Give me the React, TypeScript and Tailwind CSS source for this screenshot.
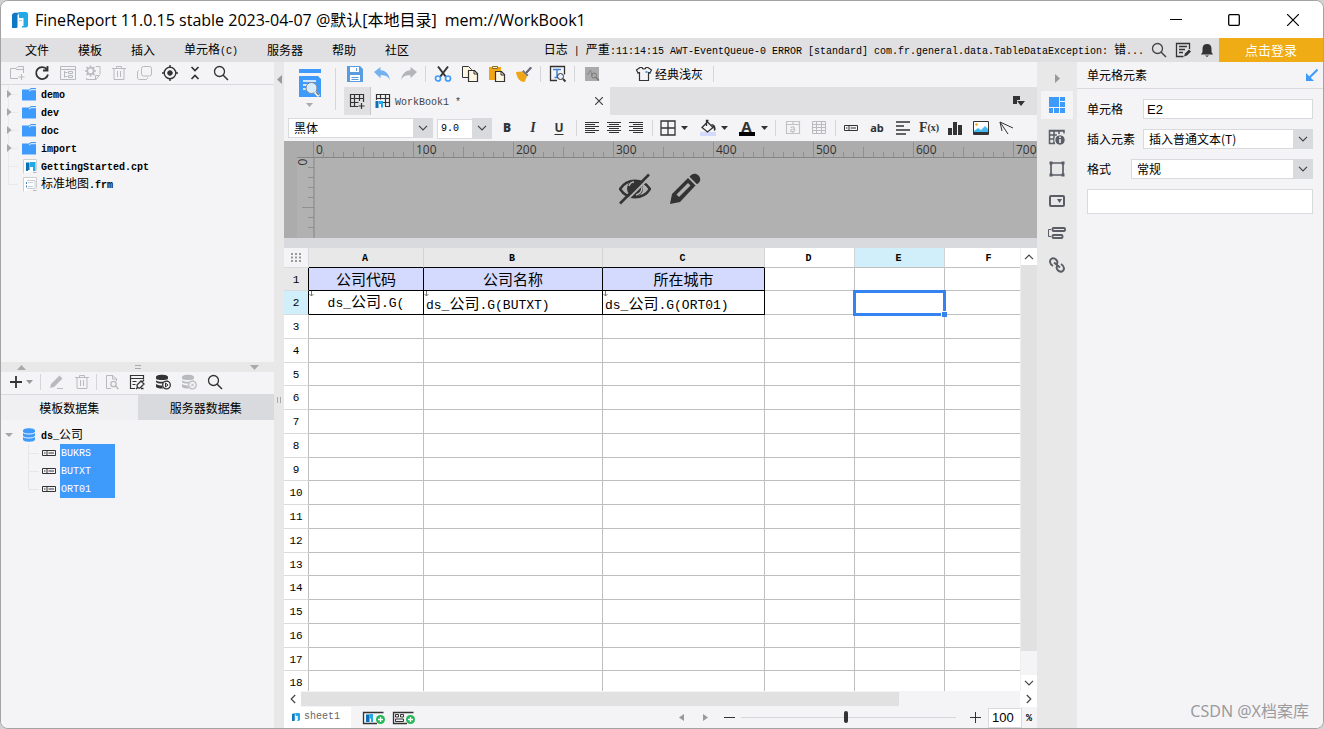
import { Fragment, type ReactNode } from 'react';

type IconProps = {
  children: ReactNode;
  className?: string;
};

/** 18px line icon, drawn on an 18 unit grid */
function Icon({ children, className = 'text-[#333]' }: IconProps) {
  return (
    <svg
      className={`h-[18px] w-[18px] shrink-0 ${className}`}
      viewBox="0 0 18 18"
      fill="none"
      stroke="currentColor"
      strokeWidth={1}
      aria-hidden="true"
    >
      {children}
    </svg>
  );
}

function ToolButton({ label, className = 'w-[27px]', children }: { label: string; className?: string; children: ReactNode }) {
  return (
    <button type="button" aria-label={label} className={`flex shrink-0 items-center justify-center ${className}`}>
      {children}
    </button>
  );
}

function Separator({ className = 'h-4 mx-[3px]' }: { className?: string }) {
  return <span className={`w-px shrink-0 bg-[#d5d6d9] ${className}`} />;
}

function Caret({ className = 'text-[#333]' }: { className?: string }) {
  return (
    <svg className={`h-1 w-[7px] shrink-0 ${className}`} viewBox="0 0 7 4" fill="currentColor" aria-hidden="true">
      <path d="M0 0h7L3.5 4z" />
    </svg>
  );
}

function Chevron({ className = '' }: { className?: string }) {
  return (
    <svg className={`h-[6px] w-[10px] ${className}`} viewBox="0 0 10 6" fill="none" stroke="#444" strokeWidth={1.2} aria-hidden="true">
      <path d="M1 .8l4 4 4-4" />
    </svg>
  );
}

/** Fixed width latin text set beside 12px Chinese text */
function Mono({ children }: { children: ReactNode }) {
  return <span className="font-['Liberation_Mono',monospace] text-[10px]">{children}</span>;
}

/* ---------- logo and file icons ---------- */

function Logo({ className = 'h-4 w-4' }: { className?: string }) {
  return (
    <svg className={`shrink-0 ${className}`} viewBox="0 0 16 16" aria-hidden="true">
      <path d="M0 2.500L2 .8h4.500v13.700L4.500 16H0z" fill="#0d78c4" />
      <path d="M6.500 0h8L16 1.500v12.500L14.500 15.500H10V8.500H6.500z" fill="#22a9e8" />
      <path d="M5.500 2.500h1.500v3.500h4.500v8H10V8H7v7.500H5.500z" fill="#fff" />
    </svg>
  );
}

function Folder() {
  return (
    <svg className="h-[13px] w-[14px]" viewBox="0 0 14 13" aria-hidden="true">
      <path d="M0 1.500h7L9 0h5v12.500H0z" fill="#3f9bfb" />
      <path d="M7 3.200L9 1.700h5" stroke="#f4f4f7" fill="none" />
    </svg>
  );
}

function CptFile() {
  return (
    <svg className="h-[15px] w-[14px]" viewBox="0 0 14 15" aria-hidden="true">
      <path d="M.5 14.500V.5h13v11" fill="#fff" stroke="#cfcfcf" />
      <path d="M3 3.500h3.500v7.500H5v1H3z" fill="#0d6fb8" />
      <path d="M7 3h5.500v9H10V8H7z" fill="#22a9e8" />
      <path d="M10 13.500h3.500" stroke="#bbb" />
    </svg>
  );
}

function FrmFile() {
  return (
    <svg className="h-[15px] w-[14px]" viewBox="0 0 14 15" fill="none" aria-hidden="true">
      <path d="M.5 14.500V.5h13v11" fill="#fff" stroke="#cfcfcf" />
      <path d="M4 3.500h8v8H4M5 5.500h5M5 9.500h5" stroke="#c8cdd3" />
      <path d="M3.500 5v2M3.500 8.500v2" stroke="#3f83c5" />
      <path d="M10 13.500h3.500" stroke="#bbb" />
    </svg>
  );
}

function FieldIcon() {
  return (
    <svg className="h-[6px] w-[14px] shrink-0" viewBox="0 0 14 6" fill="none" stroke="#333" aria-hidden="true">
      <path d="M.5.5h13v5H.5zM5 .5v5M2 3h1.500M6.500 3H12" />
    </svg>
  );
}

function SearchIcon({ className }: { className?: string }) {
  return (
    <Icon className={className}>
      <circle cx="7.500" cy="7.500" r="5" strokeWidth={1.3} />
      <path d="M11 11l5 5" strokeWidth={1.5} />
    </Icon>
  );
}

function Trash() {
  return (
    <Icon className="text-[#b9babd]">
      <path d="M2 4.500h14M6.500 4V2.500h5V4M4 4.500v11h10v-11M7.500 7v6M10.500 7v6" />
    </Icon>
  );
}

function Database({ className = 'text-[#333]', mark }: { className?: string; mark: string }) {
  return (
    <Icon className={className}>
      <path d="M2 4c0-3 12-3 12 0v1.500c0 2-12 2-12 0zM2 7.500c2 1.700 9 1.700 12 0V9c-1 2-11 2-12 0zM2 11c2 1.500 4 1.500 6 1.500l1 3c-4 0-7-.5-7-2z" fill="currentColor" stroke="none" />
      <circle cx="12.500" cy="12" r="3.800" fill="#f4f4f7" strokeWidth={1.300} />
      <path d={mark} />
    </Icon>
  );
}

/* ---------- window chrome ---------- */

const menus = ['文件', '模板', '插入', '单元格', '服务器', '帮助', '社区'];

function TitleBar() {
  return (
    <header className="flex h-[37px] shrink-0 items-center bg-white pl-[11px]">
      <Logo />
      <h1 className="ml-[7px] whitespace-pre font-['Open_Sans','Noto_Sans_CJK_SC',sans-serif] text-[16px] leading-5">
        FineReport 11.0.15 stable 2023-04-07 @默认[本地目录]
      </h1>
      <span className="ml-2 font-['Open_Sans',sans-serif] text-[16px] leading-5">mem://WorkBook1</span>
      <div className="ml-auto flex h-full">
        <ToolButton label="最小化" className="w-[58px]">
          <svg className="h-3 w-3" viewBox="0 0 12 12" stroke="#000"><path d="M0 5.500h12" /></svg>
        </ToolButton>
        <ToolButton label="最大化" className="w-[58px]">
          <svg className="h-3 w-3" viewBox="0 0 12 12" fill="none" stroke="#000" strokeWidth={1.300}><rect x=".7" y=".7" width="10.600" height="10.600" rx="1" /></svg>
        </ToolButton>
        <ToolButton label="关闭" className="w-[60px]">
          <svg className="h-3 w-3" viewBox="0 0 12 12" stroke="#000" strokeWidth={1.200}><path d="M0 0l12 12M12 0L0 12" /></svg>
        </ToolButton>
      </div>
    </header>
  );
}

function MenuBar() {
  return (
    <div className="flex h-6 shrink-0 items-center bg-[#e0e0e2] pl-6">
      <nav className="flex shrink-0 gap-[29px]">
        {menus.map((menu) => (
          <button type="button" key={menu} className="whitespace-nowrap">
            {menu}
            {menu === '单元格' && <Mono>(C)</Mono>}
          </button>
        ))}
      </nav>
      <p className="ml-auto truncate">
        日志<Mono> | </Mono>严重<Mono>:11:14:15 AWT-EventQueue-0 ERROR [standard] com.fr.general.data.TableDataException: </Mono>错<Mono>...</Mono>
      </p>
      <div className="ml-[3px] flex shrink-0 items-center">
        <ToolButton label="搜索" className="w-6"><SearchIcon className="text-[#444]" /></ToolButton>
        <ToolButton label="反馈" className="w-6">
          <Icon>
            <path d="M15.500 8V2.500h-13v13h7M5 5.500h8M5 8.500h6M5 11.500h4" strokeWidth={1.300} />
            <path d="M10 15.500l1-3 4-4 2 2-4 4z" fill="currentColor" stroke="none" />
          </Icon>
        </ToolButton>
        <ToolButton label="通知" className="w-6">
          <Icon>
            <path d="M9 3c3 0 4.500 2 4.500 4.500V11l1.500 2.500H3L4.500 11V7.500C4.500 5 6 3 9 3zM7 14.500h4L9 16z" fill="currentColor" stroke="none" />
          </Icon>
        </ToolButton>
      </div>
      <button type="button" className="h-full w-[104px] shrink-0 bg-[#f0ac14] text-[13px] text-white">点击登录</button>
    </div>
  );
}

/* ---------- left side ---------- */

const folders = ['demo', 'dev', 'doc', 'import'];
const fields = ['BUKRS', 'BUTXT', 'ORT01'];

function TreeBranch({ arrow, last = false }: { arrow?: boolean; last?: boolean }) {
  return (
    <svg className="h-[18px] w-[21px] shrink-0" viewBox="0 0 21 18" aria-hidden="true">
      <path d={last ? 'M7.500 0v9.500H17' : 'M7.500 0v18M7.500 9.500H17'} fill="none" stroke="#e9e9ec" />
      {arrow && <path d="M6 5l4.500 4L6 13z" fill="#a6a6a8" />}
    </svg>
  );
}

function FileTree() {
  return (
    <section className="flex min-h-0 flex-[277] flex-col">
      <ul>
        {folders.map((name) => (
          <li key={name} className="flex h-[18px] items-center">
            <TreeBranch arrow />
            <Folder />
            <span className="ml-[5px] font-bold"><Mono>{name}</Mono></span>
          </li>
        ))}
        <li className="flex h-[18px] items-center">
          <TreeBranch />
          <span className="ml-px"><CptFile /></span>
          <span className="ml-1 font-bold"><Mono>GettingStarted.cpt</Mono></span>
        </li>
        <li className="flex h-[18px] items-center">
          <TreeBranch last />
          <span className="ml-px"><FrmFile /></span>
          <span className="ml-1">标准地图<b><Mono>.frm</Mono></b></span>
        </li>
      </ul>
    </section>
  );
}

function FileTools() {
  return (
    <div className="flex h-[23px] shrink-0 items-center border-b border-[#d9dadd] pb-px pl-[3px] text-[#b9babd]">
      <div className="flex w-[229px] justify-between">
        <ToolButton label="新建文件夹" className="w-[25px]">
          <Icon className="text-[#b9babd]"><path d="M10 14.500H2.500v-10H8l2-2h5.500V9M8 5.500h7.500M13.500 10v6M10.500 13h6" /></Icon>
        </ToolButton>
        <ToolButton label="刷新" className="w-[25px]">
          <Icon><path d="M14 5.500a6 6 0 1 0 1 5M14.500 2v4.500H10" strokeWidth={1.800} /></Icon>
        </ToolButton>
        <ToolButton label="显示位置" className="w-[25px]">
          <Icon className="text-[#b9babd]"><path d="M1.500 2.500h15v13h-15zM1.500 5.500h15M5.500 7v6.500M5.500 8.500h3M5.500 12.500h3M9.500 7.500h4v2h-4zM9.500 11.500h4v2h-4z" /></Icon>
        </ToolButton>
        <ToolButton label="设置" className="w-[25px]">
          <Icon className="text-[#b9babd]">
            <circle cx="6.500" cy="7" r="3.200" strokeWidth={1.600} />
            <path d="M6.500 1.500v2M6.500 10.500v2M1 7h2M10 7h2M2.500 3l1.500 1.500M9 9.500l1.500 1.500M10.500 3L9 4.500M4 9.500L2.500 11" strokeWidth={1.600} />
            <path d="M12 2.500h4v8M2.500 14v1.500h10M15.500 11.500l-4 4v-4z" />
          </Icon>
        </ToolButton>
        <ToolButton label="删除" className="w-[25px]"><Trash /></ToolButton>
        <ToolButton label="复制" className="w-[25px]">
          <Icon className="text-[#b9babd]"><rect x="6.500" y="2.500" width="10" height="9.500" rx="2" /><path d="M4 6.500C2.500 6.500 2.500 8 2.500 8v6s0 1.500 2 1.500H11s1.500 0 1.500-2" /></Icon>
        </ToolButton>
        <ToolButton label="定位" className="w-[25px]">
          <Icon><circle cx="9" cy="9" r="5.800" strokeWidth={1.400} /><circle cx="9" cy="9" r="2.300" fill="currentColor" /><path d="M9 1v3M9 14v3M1 9h3M14 9h3" strokeWidth={1.400} /></Icon>
        </ToolButton>
        <ToolButton label="收起" className="w-[25px]">
          <Icon><path d="M5.500 3L9 6.500 12.500 3M5.500 15L9 11.500l3.500 3.500" strokeWidth={1.700} /></Icon>
        </ToolButton>
        <ToolButton label="搜索" className="w-[25px]"><SearchIcon /></ToolButton>
      </div>
    </div>
  );
}

function DataSetTools() {
  return (
    <div className="flex h-[23px] shrink-0 items-center border-b border-[#d9dadd] pb-[2px] pl-[5px]">
      <ToolButton label="新增数据集" className="w-[27px] gap-px">
        <Icon><path d="M9 3v12M3 9h12" strokeWidth={1.800} /></Icon>
        <Caret className="text-[#999]" />
      </ToolButton>
      <Separator className="ml-[7px] mr-[3px] h-4" />
      <ToolButton label="编辑" className="w-[25px]">
        <Icon className="text-[#b9babd]"><path d="M2 15l1-4 8.500-8.500 3 3L6 14zM9 15h6v1H9z" fill="currentColor" stroke="none" /></Icon>
      </ToolButton>
      <ToolButton label="删除" className="w-[25px]"><Trash /></ToolButton>
      <Separator className="mx-[2px] h-4" />
      <ToolButton label="预览" className="w-[25px]">
        <Icon className="text-[#b9babd]"><path d="M8 15.500H3.500v-13H10l3.500 3.500v2M9.500 2.500V6h4" /><circle cx="10.500" cy="11" r="2.700" strokeWidth={1.300} /><path d="M12.500 13l3 3" strokeWidth={1.500} /></Icon>
      </ToolButton>
      <ToolButton label="连接管理" className="w-[26px]">
        <Icon><path d="M7 15.500H2.500v-13h13v4M2.500 5.500h13M4.500 8.500h4M4.500 11.500h3" strokeWidth={1.200} /><path d="M9 12l4-4 3 3-4 4c-2 .5-3-1-3-3zM14 9l2-2M8 16l2-2M15.500 15.500H13" strokeWidth={1.300} /></Icon>
      </ToolButton>
      <ToolButton label="启用存储过程" className="w-[26px]"><Database mark="M11.500 10v4l2.500-2z" /></ToolButton>
      <ToolButton label="移除存储过程" className="w-[26px]"><Database className="text-[#b9babd]" mark="M11 10.500l3 3M14 10.500l-3 3" /></ToolButton>
      <ToolButton label="搜索" className="w-[25px]"><SearchIcon /></ToolButton>
    </div>
  );
}

function LeftPanel() {
  return (
    <aside className="flex w-[273px] shrink-0 flex-col bg-[#f4f4f7]">
      <FileTools />
      <FileTree />
      <div className="flex h-[10px] shrink-0 items-center justify-between bg-[#e8e8e8] pl-4 pr-[15px]">
        <svg className="h-[5px] w-[9px]" viewBox="0 0 9 5" fill="#a9a9a9"><path d="M0 5h9L4.500 0z" /></svg>
        <svg className="h-1 w-[6px]" viewBox="0 0 6 4" stroke="#aaa"><path d="M0 .5h6M0 3.500h6" /></svg>
        <svg className="h-[5px] w-[9px]" viewBox="0 0 9 5" fill="#a9a9a9"><path d="M0 0h9L4.500 5z" /></svg>
      </div>
      <section className="flex min-h-0 flex-[356] flex-col">
        <DataSetTools />
        <div className="grid h-[25px] shrink-0 grid-cols-2" role="tablist">
          <button type="button" role="tab" aria-selected="true" className="bg-[#f0f0f3]">模板数据集</button>
          <button type="button" role="tab" aria-selected="false" className="bg-[#d9dadd]">服务器数据集</button>
        </div>
        <div className="pt-[6px]">
          <div className="flex h-[18px] items-center">
            <svg className="h-[18px] w-[22px]" viewBox="0 0 22 18" aria-hidden="true"><path d="M4 7h8l-4 4z" fill="#a6a6a8" /></svg>
            <svg className="h-[14px] w-3" viewBox="0 0 12 14" aria-hidden="true">
              <path d="M0 2.500C0-.5 12-.5 12 2.500v9c0 3-12 3-12 0z" fill="#3f9bfb" />
              <path d="M0 4.500c2 2 10 2 12 0M0 8.500c2 2 10 2 12 0" stroke="#f4f4f7" fill="none" />
            </svg>
            <span className="ml-[6px]"><b><Mono>ds_</Mono></b>公司</span>
          </div>
          <ul>
            {fields.map((field, i) => (
              <li key={field} className="flex h-[18px] items-center pl-[21px]">
                <svg className="h-[18px] w-5 shrink-0" viewBox="0 0 20 18" fill="none" stroke="#e6e6e9" aria-hidden="true">
                  <path d={i === fields.length - 1 ? 'M6.500 0v9.500H17' : 'M6.500 0v18M6.500 9.500H17'} />
                </svg>
                <FieldIcon />
                <span className="ml-1 flex h-full w-[55px] items-center bg-[#3f9bfb] pl-px pt-[2px] text-white"><Mono>{field}</Mono></span>
              </li>
            ))}
          </ul>
        </div>
      </section>
    </aside>
  );
}

function Splitter() {
  return (
    <div className="flex w-[10px] shrink-0 flex-col items-center bg-[#e8e8e8] pt-[13px]">
      <svg className="h-[9px] w-[5px]" viewBox="0 0 5 9" fill="#999"><path d="M5 0v9L0 4.500z" /></svg>
      <svg className="mb-auto mt-[313px] h-[6px] w-1" viewBox="0 0 4 6" stroke="#aaa"><path d="M.5 0v6M3.500 0v6" /></svg>
    </div>
  );
}

/* ---------- editor ---------- */

function MainTools() {
  return (
    <div className="-ml-[3px] flex h-[25px] shrink-0 items-center pb-px">
      <ToolButton label="保存">
        <Icon><path d="M1 1h13l3 3v13H1z" fill="#5b9bdf" stroke="none" /><path d="M4 2h9v5H4zM4 10h10v6H4z" fill="#fff" stroke="none" /><path d="M10.500 3v3M5.500 12.500h7M5.500 14.500h7" stroke="#5b9bdf" /></Icon>
      </ToolButton>
      <ToolButton label="撤销">
        <Icon><path d="M1 7l6.500-5v3.200C13 5.500 16 9 17 15c-2-4-5-5-9.500-4.800v3z" fill="#74b1f0" stroke="none" /></Icon>
      </ToolButton>
      <ToolButton label="重做">
        <Icon><path d="M17 7l-6.500-5v3.200C5 5.500 2 9 1 15c2-4 5-5 9.500-4.800v3z" fill="#b4b5b8" stroke="none" /></Icon>
      </ToolButton>
      <Separator />
      <ToolButton label="剪切">
        <Icon><path d="M4 1.500l8 10.500M14 1.500L6 12" strokeWidth={2} /><circle cx="4" cy="13.500" r="2.500" stroke="#3f9bfb" strokeWidth={1.700} /><circle cx="14" cy="13.500" r="2.500" stroke="#3f9bfb" strokeWidth={1.700} /></Icon>
      </ToolButton>
      <ToolButton label="复制">
        <Icon><path d="M1.500 1.500h6l3 3v8h-9z" fill="#fdf6e3" /><path d="M7.500 5.500h6l3 3v8h-9z" fill="#fdf6e3" strokeWidth={1.200} /><path d="M13 5.500V9h3.500" /></Icon>
      </ToolButton>
      <ToolButton label="粘贴">
        <Icon><path d="M1 2h12v13H1z" fill="#f0a514" stroke="none" /><path d="M4.500 1.500h5v2h-5z" fill="#fdf6e3" stroke="#8d6a1c" /><path d="M7.500 6.500h6l3 3v7h-9z" fill="#fdf6e3" strokeWidth={1.200} /><path d="M13 6.500V10h3.500" /></Icon>
      </ToolButton>
      <ToolButton label="格式刷">
        <Icon><path d="M11 7l4.500-5 1 1L12 8z" fill="#667" stroke="#667" /><path d="M8.500 5l5 5-1.500 1.500-5-5z" fill="#777" stroke="none" /><path d="M1 7l6-.5 5 5-2.500 5.500c-4 0-7.500-3-8.500-10z" fill="#f0a514" stroke="none" /></Icon>
      </ToolButton>
      <Separator />
      <ToolButton label="模板查找">
        <Icon><path d="M8 15.500H1.500v-14h14v8" strokeWidth={1.300} /><path d="M4 4.500h8M8 4.500v8M5.500 12.500h4" stroke="#3f83d5" strokeWidth={1.500} /><circle cx="11.500" cy="11.500" r="3" fill="#e6f0fb" /><path d="M14 14l2.500 2.500" strokeWidth={1.800} /></Icon>
      </ToolButton>
      <Separator />
      <ToolButton label="模板检测">
        <Icon><path d="M2 2h14v14H2z" fill="#aaa" stroke="none" /><path d="M3.500 9h2l2-4 2 6" stroke="#888" /><circle cx="11" cy="10.500" r="2.500" stroke="#777" /><path d="M13 12.500l3 3" stroke="#777" strokeWidth={1.500} /></Icon>
      </ToolButton>
      <button type="button" className="ml-[30px] flex items-center">
        <Icon><path d="M5 2.500L1.500 5l1.500 3 1.500-.5v8h9v-8l1.500.5 1.500-3L13 2.500h-2c-.5 2-3.500 2-4 0z" strokeWidth={1.200} /><path d="M10.500 7h2" stroke="#3f9bfb" strokeWidth={2} /></Icon>
        <span className="ml-[2px]">经典浅灰</span>
      </button>
      <Separator className="ml-[10px] h-4" />
    </div>
  );
}

function TabStrip() {
  return (
    <div className="flex h-7 shrink-0 items-stretch bg-[#e0e0e2]">
      <ToolButton label="新建模板" className="w-[27px] border-r border-[#c9c9cc]">
        <Icon><path d="M10 14.500H2.500v-12h13V10M2.500 6.500h13M2.500 10.500h8M6.500 2.500v12M11.500 2.500V9M13.500 11v6M10.500 14h6" strokeWidth={1.200} /></Icon>
      </ToolButton>
      <div className="flex w-[239px] items-center bg-[#f4f4f7] pl-[3px] pr-[6px]">
        <Icon><path d="M2.500 8V2.500h13v12H11M2.500 6.500h13M9 10.500h6M6.500 2.500v5M11.500 2.500v12" strokeWidth={1.200} /><path d="M1.500 9h3v7h-3z" fill="#0d6fb8" stroke="none" /><path d="M5 9h4v6.500H7V12H5z" fill="#22a9e8" stroke="none" /></Icon>
        <span className="ml-[3px] text-[#444]"><Mono>WorkBook1 *</Mono></span>
        <ToolButton label="关闭标签" className="ml-auto w-[10px]">
          <svg className="h-2 w-2" viewBox="0 0 8 8" stroke="#444" strokeWidth={1.200}><path d="M0 0l8 8M8 0L0 8" /></svg>
        </ToolButton>
      </div>
      <ToolButton label="模板列表" className="ml-auto mr-2 w-5">
        <svg className="h-[10px] w-3" viewBox="0 0 12 10" fill="#333"><path d="M0 0h7v4H4v4H0zM4 5h8l-4 5z" /></svg>
      </ToolButton>
    </div>
  );
}

type SelectProps = {
  id: string;
  label: string;
  value: string;
  text?: string;
  className?: string;
};

function Select({ id, label, value, text = 'pl-[5px]', className = '' }: SelectProps) {
  return (
    <div className={`relative h-5 ${className}`}>
      <select id={id} aria-label={label} className={`h-full w-full appearance-none border border-[#d9dadd] bg-white ${text}`}>
        <option>{value}</option>
      </select>
      <span className="pointer-events-none absolute inset-y-0 right-0 flex w-5 items-center justify-center bg-[#d9dadd]">
        <Chevron />
      </span>
    </div>
  );
}

function AlignIcon({ short }: { short: string }) {
  return (
    <Icon>
      <path d="M2 3.500h14M2 7.500h14M2 11.500h14" />
      <path d={short} />
    </Icon>
  );
}

function FormatBar() {
  return (
    <div className="flex h-[26px] shrink-0 items-center overflow-hidden pl-1">
      <Select id="font" label="字体" value="黑体" className="w-[145px]" />
      <Select id="size" label="字号" value="9.0" className="ml-1 w-[55px]" text="pl-[3px] font-['Liberation_Mono',monospace] text-[10px]" />
      <ToolButton label="加粗" className="ml-[2px] w-[26px] font-['Noto_Sans',sans-serif] text-[12px] font-black text-[#333]">B</ToolButton>
      <ToolButton label="倾斜" className="w-[26px] font-['Liberation_Serif',serif] text-[14px] font-bold italic text-[#333]">I</ToolButton>
      <ToolButton label="下划线" className="w-[26px] font-['Noto_Sans',sans-serif] text-[12px] font-bold text-[#333] underline underline-offset-2">U</ToolButton>
      <Separator className="mx-1 h-4" />
      <ToolButton label="左对齐" className="w-[22px]"><AlignIcon short="M2 5.500h10M2 9.500h10M2 13.500h10" /></ToolButton>
      <ToolButton label="居中" className="w-[22px]"><AlignIcon short="M4 5.500h10M4 9.500h10M4 13.500h10" /></ToolButton>
      <ToolButton label="右对齐" className="w-[22px]"><AlignIcon short="M6 5.500h10M6 9.500h10M6 13.500h10" /></ToolButton>
      <Separator className="ml-[5px] mr-[2px] h-4" />
      <ToolButton label="边框" className="w-9 gap-1">
        <Icon><path d="M2 2h14v14H2zM9 2v14M2 9h14" strokeWidth={1.300} /></Icon>
        <Caret />
      </ToolButton>
      <ToolButton label="填充颜色" className="ml-1 w-9 gap-1">
        <Icon><path d="M1 13h16v4H1z" fill="#d3dafd" stroke="none" /><path d="M3 8.500L8.500 3l5.500 5.500L8.500 13zM7.500 7V1.500h2" strokeWidth={1.300} /><path d="M12 5c3 0 5 2 4.500 6l-1.500 1c0-3-1-5-3-7z" fill="currentColor" stroke="none" /></Icon>
        <Caret />
      </ToolButton>
      <ToolButton label="字体颜色" className="ml-1 w-9 gap-[6px]">
        <span className="flex w-4 flex-col items-center border-b-4 border-black font-['Noto_Sans',sans-serif] text-[15px] font-bold leading-3 text-[#333]">A</span>
        <Caret />
      </ToolButton>
      <Separator className="mx-1 h-4" />
      <ToolButton label="合并单元格" className="w-[26px]">
        <Icon className="text-[#c2c2c5]"><path d="M2.500 2.500h13v12h-13zM2.500 5.500h13M9 2v3M9 12.500v2M6.500 8.500c2-1 4-1 4 1v2.500c-2 1-4 1-4-.5s2-1.500 4-1.500" strokeWidth={1.200} /></Icon>
      </ToolButton>
      <ToolButton label="取消合并" className="w-[26px]">
        <Icon className="text-[#b9babd]"><path d="M2.500 2.500h13v12h-13zM2.500 5.500h13M2.500 8.500h13M2.500 11.500h13M6.500 2v12M11.500 2v12" /></Icon>
      </ToolButton>
      <Separator className="ml-[3px] mr-[2px] h-4" />
      <ToolButton label="数据列" className="w-[26px]"><FieldIcon /></ToolButton>
      <ToolButton label="文本" className="w-[26px] font-['Noto_Sans',sans-serif] text-[11px] font-bold text-[#333]">ab</ToolButton>
      <ToolButton label="富文本" className="w-[26px]">
        <Icon><path d="M2 3h14M2 7h8M2 11h14M2 15h10" strokeWidth={1.700} /></Icon>
      </ToolButton>
      <ToolButton label="公式" className="w-[26px] whitespace-nowrap font-['Liberation_Serif',serif] text-[14px] text-[#333]">
        <b>F</b><b className="text-[10px]">(x)</b>
      </ToolButton>
      <ToolButton label="图表" className="w-[26px]">
        <Icon><path d="M2 9h4v7H2zM7 3h4v13H7zM12 6h4v10h-4z" fill="currentColor" stroke="none" /></Icon>
      </ToolButton>
      <ToolButton label="图片" className="w-[26px]">
        <Icon><path d="M1.500 2.500h15v13h-15z" fill="#fff" /><path d="M2 12l4-3 3 2 4-4 3 3v3H2z" fill="#46b9f0" stroke="none" /><path d="M2 14h14" strokeWidth={2} /><circle cx="4.500" cy="5.500" r="1.300" fill="#f0a514" stroke="none" /></Icon>
      </ToolButton>
      <ToolButton label="斜线" className="w-[26px]">
        <Icon><path d="M2 3l13 6M2 3l8 12M2 3l2 9" /></Icon>
      </ToolButton>
    </div>
  );
}

const rulerMarks = Array.from({ length: 120 }, (_, i) => i * 10);

function Ruler() {
  return (
    <div className="relative h-[97px] shrink-0 overflow-hidden bg-[#b1b1b1]">
      <svg className="h-full w-full" aria-hidden="true">
        <path d="M0 0h30v97H0zM0 0h1200v16H0z" fill="#acacac" />
        <path d="M13 17h17v80H13z" fill="#b1b1b1" />
        {rulerMarks.map((mark) => (
          <Fragment key={mark}>
            <path
              d={`M${mark + 29.5} ${mark % 100 === 0 ? 1 : mark % 50 === 0 ? 6 : 11}V17`}
              stroke="#8f8f8f"
            />
            {mark > 0 && mark < 80 && <path d={`M${mark % 50 === 0 ? 18 : 24} ${mark + 16.5}H30`} stroke="#8f8f8f" />}
          </Fragment>
        ))}
        <path d="M30 17v80M13 16.500h1187" stroke="#858585" />
      </svg>
      <div className="absolute left-8 top-px flex font-['Open_Sans',sans-serif] text-[12px] leading-4 text-[#333]">
        {[0, 100, 200, 300, 400, 500, 600, 700].map((n) => (
          <span key={n} className="w-[100px] shrink-0">{n}</span>
        ))}
      </div>
      <span className="absolute left-4 top-[13px] -rotate-90 font-['Open_Sans',sans-serif] text-[12px] leading-4 text-[#333]">0</span>
      <div className="absolute inset-x-0 top-8 flex justify-center gap-[18px] pr-px">
        <ToolButton label="隐藏" className="w-8">
          <svg className="h-8 w-8" viewBox="0 0 32 32" fill="none" stroke="#333" strokeWidth={2.500}>
            <path d="M1 16C8 5 24 5 31 16 24 27 8 27 1 16z" />
            <circle cx="16" cy="15.500" r="8" fill="#333" stroke="none" />
            <path d="M10 13c1-3 3-4 5-4" stroke="#b1b1b1" strokeWidth={1.500} />
            <path d="M17 22c4-1 6-4 6-8" stroke="#b1b1b1" strokeWidth={1.500} />
            <path d="M3 32L32 3" stroke="#b1b1b1" strokeWidth={2} />
            <path d="M1 30.500L30 1.500" />
          </svg>
        </ToolButton>
        <ToolButton label="编辑" className="w-8">
          <svg className="h-8 w-8" viewBox="0 0 32 32" fill="#333">
            <path d="M1 31l2-10L19 5l7.500 7.500L11 29z" />
            <path d="M20.500 3.800C23 0 27 0 29.500 2.500S32 9 28 11.200z" />
            <path d="M7.500 21.500L19 10l2.500 2.500L10 24z" fill="#b1b1b1" />
          </svg>
        </ToolButton>
      </div>
    </div>
  );
}

const columns = [
  { name: 'A', width: 'w-[115px]' },
  { name: 'B', width: 'w-[179px]' },
  { name: 'C', width: 'w-[162px]' },
  { name: 'D', width: 'w-[90px]' },
  { name: 'E', width: 'w-[90px]' },
  { name: 'F', width: 'w-[90px]' },
];
const titles = ['公司代码', '公司名称', '所在城市'];
const bindings = ['', 'BUTXT)', 'ORT01)'];
const rows = Array.from({ length: 18 }, (_, i) => i + 1);

function CellContent({ row, col }: { row: number; col: number }) {
  if (row === 1 && col < 3) return <>{titles[col]}</>;
  if (row === 2 && col < 3) {
    return (
      <>
        <svg className="absolute left-0 top-0 h-[6px] w-[5px]" viewBox="0 0 5 6" fill="none" stroke="#777" aria-hidden="true">
          <path d="M2.500 0v5M.5 3l2 2 2-2" />
        </svg>
        <span className="font-['Liberation_Mono',monospace] text-[13px]">ds_</span>公司
        <span className="font-['Liberation_Mono',monospace] text-[13px]">.G({bindings[col]}</span>
      </>
    );
  }
  if (row === 2 && col === 4) {
    return (
      <span className="absolute -inset-x-[2px] -top-[1px] -bottom-[2px] z-10 border-[3px] border-[#3583f0]">
        <i className="absolute -bottom-[4px] -right-[4px] h-[6px] w-[6px] border-l border-t border-white bg-[#3583f0]" />
      </span>
    );
  }
  return null;
}

function cellStyle(row: number, col: number) {
  if (col > 2 || row > 2) return 'border-[#bfbfbf]';
  if (row === 1) return 'border-black bg-[#d3dafd] text-center';
  return col === 0 ? 'border-black text-center' : 'border-black pl-[2px] pt-[3px]';
}

function Sheet() {
  return (
    <div className="flex min-h-0 flex-1 bg-white">
      <div className="min-w-0 flex-1 overflow-hidden">
        <table className="w-[751px] table-fixed border-separate border-spacing-0 whitespace-nowrap">
          <thead className="font-['Liberation_Mono',monospace] text-[10px]">
            <tr className="h-5">
              <th className="w-[25px] border-b border-r border-[#d9dadd] bg-[#f4f4f7] p-0" aria-label="全选">
                <svg className="mx-auto h-[9px] w-[10px]" viewBox="0 0 10 9" stroke="#999" strokeWidth={2} strokeDasharray="2 2">
                  <path d="M0 1h10M0 4.500h10M0 8h10" />
                </svg>
              </th>
              {columns.map(({ name, width }, col) => (
                <th
                  key={name}
                  className={`border-b border-r p-0 pr-[2px] pt-[3px] font-semibold ${width} ${
                    col < 3 ? 'border-b-black border-r-[#d3d3d6] bg-[#e8e8e8]' : 'border-b-[#bfbfbf] border-r-[#d3d3d6]'
                  } ${name === 'E' ? 'bg-[#d0effa]' : ''}`}
                >
                  {name}
                </th>
              ))}
            </tr>
          </thead>
          <tbody className="text-[15px]">
            {rows.map((row) => (
              <tr key={row} className={row % 4 === 1 ? 'h-[23px]' : 'h-6'}>
                <th
                  className={`border-b border-r border-b-[#d9dadd] p-0 pt-px text-center font-['Liberation_Mono',monospace] text-[11px] font-normal leading-4 ${
                    row < 3 ? 'border-r-black' : 'border-r-[#bfbfbf]'
                  } ${row === 1 ? 'bg-[#e8e8e8]' : ''} ${row === 2 ? 'bg-[#d0effa]' : ''}`}
                >
                  {row}
                </th>
                {columns.map(({ name }, col) => (
                  <td key={name} className={`relative border-b border-r p-0 leading-4 ${cellStyle(row, col)}`}>
                    <CellContent row={row} col={col} />
                  </td>
                ))}
              </tr>
            ))}
          </tbody>
        </table>
      </div>
      <div className="flex w-[17px] shrink-0 flex-col border-l border-[#eeeef0] bg-[#f4f4f7]">
        <ToolButton label="向上" className="h-[17px] w-4 bg-white"><Chevron className="rotate-180" /></ToolButton>
        <div className="min-h-0 flex-[386] bg-[#e1e1e1]" />
        <div className="min-h-0 flex-[24]" />
        <ToolButton label="向下" className="h-4 w-4 bg-white"><Chevron /></ToolButton>
      </div>
    </div>
  );
}

function SheetBar() {
  return (
    <div className="flex h-[21px] shrink-0 items-center">
      <button type="button" className="flex h-full w-[67px] items-center bg-white pb-[2px] pl-2 text-[#666]">
        <Logo className="mr-1 h-2 w-2" />
        <Mono>sheet1</Mono>
      </button>
      <ToolButton label="新增工作表" className="ml-[11px] w-6">
        <svg className="h-[14px] w-6" viewBox="0 0 24 14" fill="none" stroke="#333">
          <path d="M15 12.500H1.500v-11h20" strokeWidth={1.300} />
          <path d="M4 3.500h3.500V11H4z" fill="#0d6fb8" stroke="none" /><path d="M7.500 3H11v8H9V7.500H7.500z" fill="#22a9e8" stroke="none" />
          <circle cx="18.500" cy="8.500" r="4.500" fill="#22b955" stroke="none" /><path d="M18.500 6v5M16 8.500h5" stroke="#fff" strokeWidth={1.300} />
        </svg>
      </ToolButton>
      <ToolButton label="新增聚合报表" className="ml-[6px] w-6">
        <svg className="h-[14px] w-6" viewBox="0 0 24 14" fill="none" stroke="#333">
          <path d="M15 12.500H1.500v-11h20" strokeWidth={1.300} />
          <path d="M3.500 3.500h3v2.500h-3zM8.500 3.500h3v2.500h-3zM3.500 8h8v2.500h-8z" />
          <circle cx="18.500" cy="8.500" r="4.500" fill="#22b955" stroke="none" /><path d="M18.500 6v5M16 8.500h5" stroke="#fff" strokeWidth={1.300} />
        </svg>
      </ToolButton>
      <div className="ml-auto flex items-center">
        <ToolButton label="上一页" className="w-6"><svg className="h-[7px] w-[5px]" viewBox="0 0 5 7" fill="#999"><path d="M5 0v7L0 3.500z" /></svg></ToolButton>
        <ToolButton label="下一页" className="w-6"><svg className="h-[7px] w-[5px]" viewBox="0 0 5 7" fill="#999"><path d="M0 0v7l5-3.500z" /></svg></ToolButton>
        <ToolButton label="缩小" className="w-6"><svg className="h-[11px] w-[11px]" viewBox="0 0 11 11" stroke="#333"><path d="M0 5.500h11" /></svg></ToolButton>
        <input
          type="range"
          aria-label="缩放"
          defaultValue={49}
          className="h-3 w-[215px] appearance-none bg-transparent [&::-webkit-slider-runnable-track]:h-px [&::-webkit-slider-runnable-track]:bg-[#d5d6d9] [&::-webkit-slider-thumb]:-mt-[6px] [&::-webkit-slider-thumb]:h-3 [&::-webkit-slider-thumb]:w-1 [&::-webkit-slider-thumb]:appearance-none [&::-webkit-slider-thumb]:rounded-sm [&::-webkit-slider-thumb]:bg-[#333]"
        />
        <ToolButton label="放大" className="ml-[6px] w-[26px]"><svg className="h-[11px] w-[11px]" viewBox="0 0 11 11" stroke="#333"><path d="M0 5.500h11M5.500 0v11" /></svg></ToolButton>
        <input aria-label="缩放百分比" defaultValue="100" className="h-5 w-[34px] border border-[#d9dadd] bg-white pl-[3px] font-['Liberation_Sans',sans-serif] text-[13px]" />
        <span className="w-[15px] pl-1 font-bold"><Mono>%</Mono></span>
      </div>
    </div>
  );
}

function Editor() {
  return (
    <main className="flex min-w-0 flex-1 flex-col bg-[#f4f4f7]">
      <div className="flex shrink-0">
        <div className="flex w-[60px] shrink-0">
          <button type="button" aria-label="预览" className="flex w-[51px] flex-col items-center pt-[7px]">
            <svg className="h-7 w-[22px]" viewBox="0 0 22 28" aria-hidden="true">
              <path d="M0 0h22v4H0zM0 7h19l3 3v18H0z" fill="#3f9bfb" />
              <path d="M4 12h13M4 16h5M4 20h3" stroke="#fff" strokeWidth={1.500} />
              <circle cx="12.500" cy="19" r="5.500" fill="#d7ecff" stroke="#7d8894" />
              <path d="M16 23l4 4" stroke="#fff" strokeWidth={3} />
              <path d="M17 23l3 3" stroke="#777" strokeWidth={1.500} />
            </svg>
            <Caret className="mt-[6px] text-[#aaa]" />
          </button>
          <Separator className="mt-[6px] h-[42px]" />
        </div>
        <div className="flex min-w-0 flex-1 flex-col">
          <MainTools />
          <TabStrip />
        </div>
      </div>
      <FormatBar />
      <Ruler />
      <div className="h-[10px] shrink-0 bg-[#d9dadd]" />
      <Sheet />
      <div className="flex h-4 shrink-0">
        <ToolButton label="向左" className="w-[17px] bg-white"><Chevron className="rotate-90" /></ToolButton>
        <div className="my-px flex-[598] bg-[#e1e1e1]" />
        <div className="flex-[121]" />
        <ToolButton label="向右" className="w-[17px] bg-white"><Chevron className="-rotate-90" /></ToolButton>
      </div>
      <SheetBar />
    </main>
  );
}

/* ---------- right side ---------- */

function SideTabs() {
  return (
    <nav className="flex w-10 shrink-0 flex-col items-center gap-1 bg-[#e8e8e8]">
      <ToolButton label="收起面板" className="h-[25px] w-8 pt-2">
        <svg className="h-[9px] w-[5px]" viewBox="0 0 5 9" fill="#999"><path d="M0 0v9l5-4.500z" /></svg>
      </ToolButton>
      <ToolButton label="单元格元素" className="h-7 w-8 bg-[#f4f4f7]">
        <Icon><path d="M1 1h10v10H1zM12 1h5v4h-5zM12 6h5v5h-5zM1 12h4v5H1zM6 12h5v5H6zM12 12h5v5h-5z" fill="#3f9bfb" stroke="none" /></Icon>
      </ToolButton>
      <ToolButton label="单元格属性" className="h-7 w-8">
        <Icon className="text-[#5a5d66]"><path d="M7 15.500H1.500v-13H16v3M2 3h14M2 7h7M2 11h4M6 2v14M11 2v4" strokeWidth={1.500} /><circle cx="12" cy="12" r="5.200" fill="currentColor" stroke="#e8e8e8" /><path d="M12 8.500v1.500M12 11v4" stroke="#e8e8e8" strokeWidth={1.700} /></Icon>
      </ToolButton>
      <ToolButton label="悬浮元素" className="h-7 w-8">
        <Icon className="text-[#5a5d66]"><path d="M3 3h12v12H3z" strokeWidth={1.700} /><path d="M1.500 1.500h3v3h-3zM13.500 1.500h3v3h-3zM1.500 13.500h3v3h-3zM13.500 13.500h3v3h-3z" fill="currentColor" stroke="none" /></Icon>
      </ToolButton>
      <ToolButton label="控件设置" className="h-7 w-8">
        <Icon className="text-[#5a5d66]"><rect x="2" y="4" width="14" height="10" rx="1" strokeWidth={2} /><path d="M9 7h5l-2.500 4z" fill="currentColor" stroke="none" /></Icon>
      </ToolButton>
      <ToolButton label="条件属性" className="h-7 w-8">
        <Icon className="text-[#5a5d66]"><rect x="4.500" y="4" width="12.500" height="3" rx="1" strokeWidth={1.900} /><rect x="4.500" y="11" width="10" height="3" rx="1" strokeWidth={1.900} /><path d="M3 5.500H.5v7H3" /></Icon>
      </ToolButton>
      <ToolButton label="超级链接" className="h-7 w-8">
        <Icon className="text-[#5a5d66]">
          <path d="M9 8C10.500 5 7 1.500 4 2.500 1 4 1.500 8 5 10M9 10c-1.500 3 2 6.500 5 5.500 3-1.500 2.500-5.500-1-7.500M6 6.500l6 5" strokeWidth={1.900} />
        </Icon>
      </ToolButton>
    </nav>
  );
}

function PropertyPanel() {
  return (
    <aside className="flex w-[246px] shrink-0 flex-col bg-[#f4f4f7]">
      <div className="flex h-[27px] items-center justify-between border-b border-[#d9dadd] pl-[10px] pr-[5px]">
        <h2>单元格元素</h2>
        <svg className="h-3 w-3" viewBox="0 0 12 12" fill="none" stroke="#3f9bfb" strokeWidth={2}>
          <path d="M11.500.5L3 9" /><path d="M0 4v8h8z" fill="#3f9bfb" stroke="none" />
        </svg>
      </div>
      <form className="flex flex-col gap-[10px] px-[10px] pt-[10px]">
        <div className="flex h-5 items-center">
          <label htmlFor="cell" className="w-14">单元格</label>
          <input id="cell" defaultValue="E2" className="h-full min-w-0 flex-1 border border-[#d9dadd] bg-white pl-[3px] font-['Liberation_Sans',sans-serif] text-[13px]" />
        </div>
        <div className="flex h-5 items-center">
          <label htmlFor="element" className="w-14">插入元素</label>
          <Select id="element" label="插入元素" value="插入普通文本(T)" className="flex-1" />
        </div>
        <div className="flex h-5 items-center">
          <label htmlFor="format" className="w-11">格式</label>
          <Select id="format" label="格式" value="常规" className="flex-1" />
        </div>
        <input aria-label="文本内容" className="h-[25px] border border-[#d9dadd] bg-white px-1" />
      </form>
      <p className="mb-[7px] mr-[14px] mt-auto text-right font-['Noto_Sans','Noto_Sans_CJK_SC',sans-serif] text-[16px] leading-5 text-[#9b9b9e]">CSDN @X档案库</p>
    </aside>
  );
}

export default function App() {
  return (
    <div className="h-screen bg-[#d2d2d2]">
      <div className="flex h-full flex-col overflow-hidden rounded-lg border border-[#a3a3a5] bg-[#f4f4f7] font-['Noto_Sans_CJK_SC',sans-serif] text-[12px] leading-4 text-black">
        <TitleBar />
        <MenuBar />
        <div className="flex min-h-0 flex-1">
          <LeftPanel />
          <Splitter />
          <Editor />
          <SideTabs />
          <PropertyPanel />
        </div>
      </div>
    </div>
  );
}
